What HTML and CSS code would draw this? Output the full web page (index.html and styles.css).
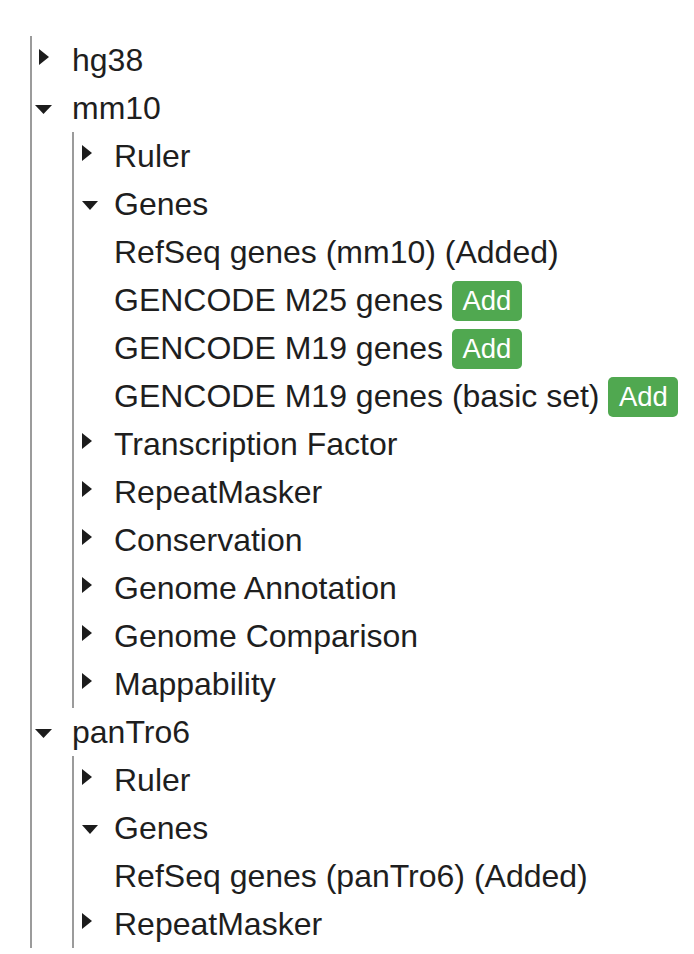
FILE: index.html
```html
<!DOCTYPE html>
<html>
<head>
<meta charset="utf-8">
<link rel="stylesheet" href="styles.css">
</head>
<body>
<div class="tree">
  <ul class="level">
    <li>
      <div class="row"><span class="caret"><svg width="40" height="48"><polygon points="7,13 17,21 7,29" /></svg></span><span class="label">hg38</span></div>
    </li>
    <li>
      <div class="row"><span class="caret"><svg width="40" height="48"><polygon points="3,21 20,21 11.5,30" /></svg></span><span class="label">mm10</span></div>
      <ul class="level nested">
        <li><div class="row"><span class="caret"><svg width="40" height="48"><polygon points="8,13 18,21 8,29" /></svg></span><span class="label">Ruler</span></div></li>
        <li>
          <div class="row"><span class="caret"><svg width="40" height="48"><polygon points="8,21 24,21 16,30" /></svg></span><span class="label">Genes</span></div>
          <ul class="leaves">
            <li class="row">RefSeq genes (mm10) (Added)</li>
            <li class="row">GENCODE M25 genes <button class="add">Add</button></li>
            <li class="row">GENCODE M19 genes <button class="add">Add</button></li>
            <li class="row">GENCODE M19 genes (basic set) <button class="add">Add</button></li>
          </ul>
        </li>
        <li><div class="row"><span class="caret"><svg width="40" height="48"><polygon points="8,13 18,21 8,29" /></svg></span><span class="label">Transcription Factor</span></div></li>
        <li><div class="row"><span class="caret"><svg width="40" height="48"><polygon points="8,13 18,21 8,29" /></svg></span><span class="label">RepeatMasker</span></div></li>
        <li><div class="row"><span class="caret"><svg width="40" height="48"><polygon points="8,13 18,21 8,29" /></svg></span><span class="label">Conservation</span></div></li>
        <li><div class="row"><span class="caret"><svg width="40" height="48"><polygon points="8,13 18,21 8,29" /></svg></span><span class="label">Genome Annotation</span></div></li>
        <li><div class="row"><span class="caret"><svg width="40" height="48"><polygon points="8,13 18,21 8,29" /></svg></span><span class="label">Genome Comparison</span></div></li>
        <li><div class="row"><span class="caret"><svg width="40" height="48"><polygon points="8,13 18,21 8,29" /></svg></span><span class="label">Mappability</span></div></li>
      </ul>
    </li>
    <li>
      <div class="row"><span class="caret"><svg width="40" height="48"><polygon points="3,21 20,21 11.5,30" /></svg></span><span class="label">panTro6</span></div>
      <ul class="level nested">
        <li><div class="row"><span class="caret"><svg width="40" height="48"><polygon points="8,13 18,21 8,29" /></svg></span><span class="label">Ruler</span></div></li>
        <li>
          <div class="row"><span class="caret"><svg width="40" height="48"><polygon points="8,21 24,21 16,30" /></svg></span><span class="label">Genes</span></div>
          <ul class="leaves">
            <li class="row">RefSeq genes (panTro6) (Added)</li>
          </ul>
        </li>
        <li><div class="row"><span class="caret"><svg width="40" height="48"><polygon points="8,13 18,21 8,29" /></svg></span><span class="label">RepeatMasker</span></div></li>
      </ul>
    </li>
  </ul>
</div>
</body>
</html>
```

FILE: styles.css
```css
html, body {
  margin: 0;
  padding: 0;
  background: #ffffff;
}

body {
  font-family: "Liberation Sans", Arial, Helvetica, sans-serif;
  font-size: 32px;
  color: #1e1e1e;
}

.tree {
  padding: 36px 0 0 30px;
}

ul {
  list-style: none;
  margin: 0;
  padding: 0;
}

.level {
  border-left: 2px solid #9b9b9b;
}

.nested {
  margin-left: 40px;
}

.leaves {
  padding-left: 40px;
}

.row {
  display: flex;
  align-items: center;
  height: 48px;
  line-height: 48px;
  white-space: pre;
}

.caret {
  display: block;
  width: 40px;
  height: 48px;
  flex: none;
}

.caret svg {
  display: block;
  fill: #1c1c1c;
}

.add {
  font-family: "Liberation Sans", Arial, Helvetica, sans-serif;
  font-size: 27.5px;
  color: #ffffff;
  background: #50a850;
  border: none;
  border-radius: 5px;
  height: 40px;
  width: 70px;
  padding: 0;
  line-height: 40px;
  margin-top: 2px;
}
```
